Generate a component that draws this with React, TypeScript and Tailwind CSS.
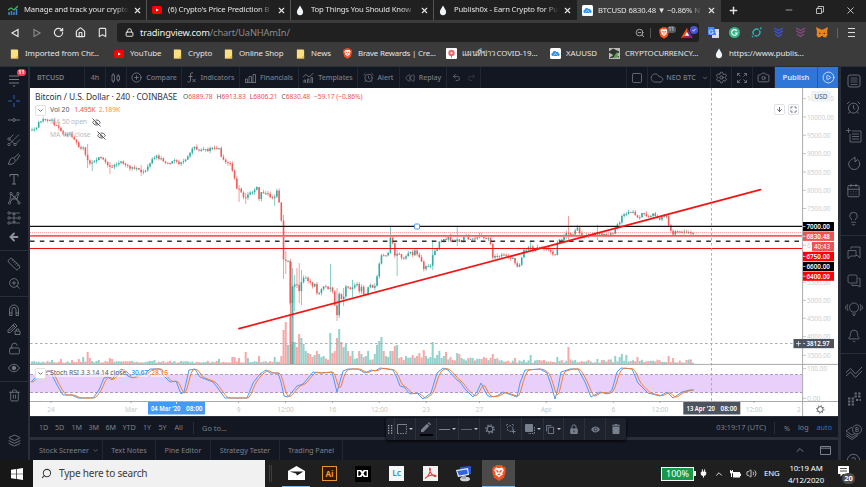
import type { ReactNode } from "react";
import {
  AlarmClock,
  ArrowDown,
  ArrowLeft,
  Bell,
  Bookmark,
  CalendarDays,
  Camera,
  ChevronDown,
  ChevronUp,
  CircleHelp,
  CirclePlay,
  CirclePlus,
  Cloud,
  Eye,
  EyeOff,
  House,
  Layers,
  Lightbulb,
  Lock,
  LockOpen,
  Maximize,
  Minus,
  Plug,
  Plus,
  Redo2,
  Rewind,
  RotateCw,
  Ruler,
  Search,
  Settings,
  Square,
  Trash2,
  Undo2,
  Volume2,
  X,
  ZoomIn,
  ZoomOut,
} from "lucide-react";

type Point = [number, number];

const UP = "#26a69a";
const DOWN = "#ef5350";
const CHART_X = 30;
const CHART_Y = 88;
const STEP = 2.226;

// close price track, in screen units
const closes: Point[] = [
  [31, 129.5], [36, 128.5], [38, 124], [41, 120], [44, 119.5], [48, 120], [51, 118], [54, 124],
  [57, 125], [60, 129], [62, 132], [65, 135], [70, 134], [73, 138], [76, 142], [78, 147],
  [81, 148], [84, 148], [87, 160], [89, 163], [92, 163], [96, 159], [99, 158], [102, 158],
  [105, 161], [108, 165], [111, 169], [114, 165], [118, 164], [121, 162], [124, 164], [127, 166],
  [130, 169], [133, 168], [135, 170], [138, 168], [141, 171], [144, 171], [147, 168], [150, 163],
  [153, 159], [156, 156], [159, 158], [162, 159], [165, 163], [168, 164], [171, 163], [173, 160],
  [176, 162], [180, 164], [184, 162], [186, 159], [189, 155], [192, 149], [195, 147], [198, 151],
  [201, 150], [204, 148], [207, 151], [210, 148], [213, 149], [216, 148], [219, 148], [221, 156],
  [225, 162], [231, 163], [233, 174], [235, 179], [237, 189], [240, 188], [242, 194], [244, 197],
  [247, 199], [248, 194], [251, 193], [253, 193], [257, 187], [259, 199], [261, 191], [263, 192],
  [267, 194], [270, 197], [273, 199], [277, 191], [279, 202], [281, 212], [283, 260], [286, 260],
  [288, 262], [290, 306], [292, 286], [294, 284], [297, 284], [299, 291], [301, 284], [303, 277],
  [306, 279], [308, 281], [310, 282], [312, 288], [315, 284], [317, 294], [319, 292], [321, 291],
  [323, 286], [326, 287], [328, 288], [330, 288], [332, 289], [334, 302], [337, 316], [339, 294],
  [341, 300], [343, 300], [346, 287], [348, 287], [351, 289], [353, 288], [357, 284], [359, 291],
  [361, 285], [363, 295], [366, 293], [368, 287], [370, 285], [372, 288], [374, 289], [377, 276],
  [379, 266], [381, 254], [383, 256], [386, 256], [388, 254], [390, 237], [392, 240], [395, 257],
  [397, 254], [399, 253], [401, 257], [403, 258], [406, 256], [410, 252], [412, 256], [414, 251],
  [417, 253], [419, 258], [421, 259], [424, 270], [426, 265], [428, 266], [430, 269], [432, 255],
  [434, 252], [437, 248], [439, 242], [441, 243], [443, 236], [445, 242], [448, 236], [452, 242],
  [457, 240], [460, 241], [463, 238], [467, 235], [469, 241], [473, 238], [477, 237], [479, 234],
  [482, 236], [485, 240], [489, 239], [492, 249], [493, 259], [496, 256], [500, 255], [503, 255],
  [507, 256], [510, 258], [513, 258], [516, 267], [518, 268], [521, 260], [523, 251], [526, 249],
  [530, 247], [533, 250], [537, 248], [540, 247], [543, 248], [547, 248], [550, 252], [553, 254],
  [556, 256], [557.5, 240], [560, 240], [563, 239], [567, 233], [572, 235], [575, 231], [578, 228],
  [581, 237], [585, 236], [590, 236], [593, 234], [598, 234], [603, 235], [610, 235], [613, 233],
  [617, 225], [620, 222], [623, 214], [627, 214], [632, 211], [635, 214], [638, 219], [642, 214],
  [647, 216], [650, 216], [653, 213], [657, 217], [659, 221], [662, 217], [666, 216], [668, 221],
  [669, 228], [673, 234], [677, 231], [680, 232], [683, 231], [687, 232], [691, 234], [695, 232],
];

// x, top, bottom
const longWicks: [number, number, number][] = [
  [87, 144, 168], [92, 160, 171], [111, 162, 174], [140, 165, 176], [240, 185, 202], [246, 193, 204],
  [275, 195, 206], [283, 215, 279], [286, 251, 274], [292, 268, 318], [295, 275, 311], [297, 268, 288],
  [299, 263, 303], [301, 270, 305], [330, 264, 292], [337, 288, 321], [339, 292, 318], [343, 288, 306],
  [353, 280, 297], [390, 227, 254], [397, 250, 276], [432, 240, 270], [457, 227, 246], [569, 216, 240],
  [597, 225, 240], [531, 241, 252],
];

const bigVolumes: Point[] = [
  [51, 4], [60, 5], [72, 4], [78, 5], [84, 7], [87, 12], [90, 6], [98, 4], [110, 6], [113, 5], [154, 4],
  [220, 5], [232, 7], [235, 7], [238, 6], [245, 12], [248, 6], [259, 8], [274, 7], [281, 8], [283, 34],
  [286, 42], [288, 19], [290, 50], [292, 22], [294, 22], [297, 17], [299, 30], [301, 26], [303, 20],
  [306, 13], [308, 11], [310, 10], [312, 7], [315, 9], [317, 13], [319, 10], [323, 8], [330, 31],
  [332, 11], [334, 13], [337, 26], [339, 35], [341, 22], [343, 17], [346, 20], [348, 13], [350, 8],
  [353, 13], [359, 13], [361, 10], [366, 8], [368, 13], [374, 10], [377, 19], [379, 23], [381, 27],
  [383, 13], [386, 8], [390, 13], [392, 13], [395, 18], [397, 19], [401, 7], [406, 8], [412, 9],
  [417, 8], [419, 11], [423, 14], [426, 8], [430, 7], [432, 22], [437, 9], [439, 13], [443, 8],
  [446, 12], [457, 11], [459, 10], [492, 10], [516, 6], [530, 9], [557, 7], [569, 17], [598, 5],
  [615, 8], [619, 7], [622, 10], [627, 9], [638, 7], [669, 8], [673, 6],
];

const stoch: Point[] = [
  [31, 382], [36, 377], [42, 373], [47, 371], [50, 371], [57, 385], [63, 395], [72, 395], [78, 398],
  [93, 398], [99, 390], [104, 378], [108, 377], [112, 380], [117, 372], [122, 369], [128, 376],
  [133, 378], [140, 374], [145, 374], [150, 369], [160, 369], [163, 375], [170, 382], [176, 381],
  [181, 394], [184, 392], [189, 370], [195, 369], [200, 377], [213, 382], [217, 387], [225, 398],
  [247, 398], [253, 383], [260, 374], [266, 370], [270, 373], [278, 373], [281, 382], [284, 396],
  [288, 397], [297, 386], [303, 384], [313, 372], [320, 373], [332, 372], [337, 392], [343, 371],
  [348, 369], [358, 369], [365, 373], [371, 370], [375, 371], [380, 368], [393, 370], [397, 378],
  [400, 386], [404, 387], [410, 394], [417, 393], [423, 399], [431, 393], [437, 373], [443, 368],
  [448, 370], [457, 380], [460, 382], [465, 389], [473, 397], [477, 392], [481, 383], [487, 395],
  [490, 397], [497, 396], [503, 392], [517, 397], [520, 383], [525, 370], [540, 369], [547, 373],
  [552, 388], [555, 399], [558, 388], [561, 372], [570, 369], [578, 369], [585, 382], [591, 397],
  [600, 392], [607, 394], [612, 390], [617, 372], [621, 368], [632, 369], [638, 383], [648, 393],
  [660, 396], [667, 392], [673, 398], [682, 392], [690, 390], [694, 390],
];

function at(points: Point[], x: number) {
  for (let i = 1; i < points.length; i++) {
    const [x0, y0] = points[i - 1];
    const [x1, y1] = points[i];
    if (x <= x1) {
      return y0 + ((y1 - y0) * Math.max(0, x - x0)) / (x1 - x0);
    }
  }
  return points[points.length - 1][1];
}

function noise(n: number) {
  const v = Math.sin(n * 127.1 + 11.7) * 43758.5453;
  return v - Math.floor(v);
}

const candles = Array.from({ length: 298 }, (_, i) => {
  const x = 32 + i * STEP;
  const jitter = (k: number) => (noise(k) - 0.5) * 2.4;
  const open = i === 0 ? 130 : at(closes, x - STEP) + jitter(i - 1);
  const close = at(closes, x) + jitter(i);
  let top = Math.min(open, close) - noise(i + 400) * 2.6;
  let bottom = Math.max(open, close) + noise(i + 900) * 2.6;
  const wick = longWicks.find(([wx]) => Math.abs(wx - x) <= STEP / 2);
  if (wick) {
    top = Math.min(wick[1], top);
    bottom = Math.max(wick[2], bottom);
  }
  const big = bigVolumes.find(([vx]) => Math.abs(vx - x) <= STEP / 2);
  const base = x > 283 && x < 500 ? 3.5 : 1.2;
  const volume = big ? big[1] : base + noise(i + 50) * (x > 283 ? 3.5 : 2);
  return { x, open, close, top, bottom, volume, color: close <= open ? UP : DOWN };
});

const stochLine = stoch.map((p) => p.join(",")).join(" ");
const signalLine = Array.from({ length: 332 }, (_, i) => {
  const x = 31 + i * 2;
  const y = (at(stoch, x - 4) + at(stoch, x - 2.5) + at(stoch, x - 1)) / 3;
  return `${x},${y.toFixed(1)}`;
}).join(" ");

const priceLabels: [string, number][] = [
  ["10500.00", 98.7], ["10000.00", 117], ["9500.00", 135.3], ["9000.00", 153.6], ["8500.00", 172],
  ["8000.00", 190.3], ["7500.00", 208.5], ["6500.00", 245.2], ["5500.00", 282.3], ["5000.00", 300.3],
  ["4500.00", 318.3], ["4000.00", 336.7], ["3500.00", 355.3], ["100.00", 368.7], ["0.00", 398.3],
];

const timeLabels: [string, number][] = [
  ["24", 51], ["Mar", 131], ["9", 238.5], ["12:00", 285.5], ["16", 332.5], ["12:00", 379.3],
  ["23", 426.3], ["27", 479.5], ["Apr", 546.3], ["6", 613.3], ["12:00", 660], ["12:00", 754],
];

const priceTags: [string, number, string][] = [
  ["7000.00", 222, "#000000"], ["6830.48", 231.7, "#ef5350"], ["6750.00", 251.8, "#ff0000"],
  ["6600.00", 261.8, "#000000"], ["6400.00", 271.6, "#ff0000"],
];

function Chart() {
  return (
    <svg
      viewBox={`${CHART_X} ${CHART_Y} 808 328`}
      className="block h-[328px] w-[808px]"
      fontFamily="'Noto Sans', sans-serif"
      fontSize="7.2"
    >
      <rect x="30" y="374.5" width="772" height="18" fill="#e9d0fb" />
      <path d="M30 374.5H802M30 392.5H802" stroke="#9b8aa8" strokeWidth="0.8" strokeDasharray="3 2" />
      {candles.map((c) => (
        <rect
          key={c.x}
          x={c.x - 1}
          y={364 - c.volume}
          width="2"
          height={c.volume}
          fill={c.color}
          opacity="0.5"
        />
      ))}
      {candles.map((c) => (
        <g key={c.x} fill={c.color}>
          <rect x={c.x - 0.35} y={c.top} width="0.8" height={c.bottom - c.top} opacity="0.7" />
          <rect
            x={c.x - 0.8}
            y={Math.min(c.open, c.close)}
            width="1.6"
            height={Math.max(1, Math.abs(c.close - c.open))}
            opacity="0.9"
          />
        </g>
      ))}
      <rect x="290" y="262" width="1.8" height="102" fill={DOWN} opacity="0.65" />
      <rect x="292" y="286" width="1.6" height="78" fill={UP} opacity="0.65" />

      <path d="M30 232.6H802" stroke="#ef5350" strokeWidth="0.8" strokeDasharray="1 1" opacity="0.65" />
      <path d="M30 236H802" stroke="#ff8a8a" strokeWidth="1.8" />
      <path d="M30 235.6H802" stroke="#f04040" strokeWidth="0.7" />
      <path d="M30 241.3H802" stroke="#333" strokeWidth="1.4" strokeDasharray="4.6 5.2" />
      <path d="M30 248.5H802" stroke="#f01010" strokeWidth="1" />
      <path d="M30 226.4H802" stroke="#111" strokeWidth="1.1" />
      <path d="M239 328.6L760.5 189.7" stroke="#f51414" strokeWidth="1.8" strokeLinecap="round" />
      <rect x="414.6" y="224" width="5" height="5" rx="1" fill="#fff" stroke="#4b93e8" />

      <polyline points={stochLine} fill="none" stroke="#4a9cf8" strokeWidth="1" />
      <polyline points={signalLine} fill="none" stroke="#f08038" strokeWidth="1" />

      <path d="M30 343.5H802M711.5 88V401" stroke="#a2a5ac" strokeWidth="0.9" strokeDasharray="2.6 2.4" />
      <path d="M30 364.4H838M30 401.5H838M802.6 88V416" stroke="#a0a0a3" strokeWidth="0.9" />

      {priceLabels.map(([label, y]) => (
        <g key={label}>
          <path d={`M803 ${y}h3`} stroke="#b5b5b8" strokeWidth="0.8" />
          <text
            x="807"
            y={y + 2.5}
            fill="#cdcdd0"
            textLength={label.length * 3.36}
            lengthAdjust="spacingAndGlyphs"
          >
            {label}
          </text>
        </g>
      ))}
      <rect x="811" y="91" width="20" height="10.5" rx="2" fill="#edf1f8" />
      <text x="821" y="98.9" textAnchor="middle" fontSize="6.4" fill="#50535e">USD</text>
      {priceTags.map(([label, y, fill]) => (
        <g key={label}>
          <rect x="803" y={y} width="31" height="9.2" fill={fill} />
          <path d={`M803 ${y + 4.6}h2.5`} stroke="#fff" strokeWidth="0.7" />
          <text x="806.5" y={y + 7.1} fill="#fff" fontWeight="600" textLength="23.5" lengthAdjust="spacingAndGlyphs">
            {label}
          </text>
        </g>
      ))}
      <rect x="812" y="242" width="22" height="9.2" fill="#ef5350" />
      <text x="814" y="249.1" fill="#fff" textLength="16" lengthAdjust="spacingAndGlyphs">40:43</text>
      <rect x="793.5" y="339" width="40.5" height="9.2" fill="#4c525e" />
      <path d="M796 343.6h5M798.5 341.1v5M803 343.6h2" stroke="#fff" strokeWidth="0.7" />
      <text x="806.5" y="346.1" fill="#fff" fontWeight="600" textLength="23" lengthAdjust="spacingAndGlyphs">3812.97</text>

      {timeLabels.map(([label, x]) => (
        <g key={x}>
          <path d={`M${x} 401v2`} stroke="#98989c" strokeWidth="0.8" />
          <text x={x} y="412.4" textAnchor="middle" fontSize="6.5" fill="#c8c8cb">{label}</text>
        </g>
      ))}
      <text x="797" y="412.4" fontSize="6.5" fill="#c8c8cb">2</text>
      <rect x="148" y="402" width="57" height="12.5" fill="#419bf9" />
      <path d="M176.5 402v2M711.5 402v2" stroke="#fff" strokeWidth="0.8" />
      <g fontSize="6.5" fontWeight="600" fill="#fff">
        <text x="151" y="410.7" textLength="29.5" lengthAdjust="spacingAndGlyphs">04 Mar '20</text>
        <text x="186" y="410.7" textLength="16.5" lengthAdjust="spacingAndGlyphs">08:00</text>
        <rect x="683.3" y="402" width="57" height="12.5" fill="#4c525e" />
        <text x="686.5" y="410.7" textLength="28.5" lengthAdjust="spacingAndGlyphs">13 Apr '20</text>
        <text x="720.5" y="410.7" textLength="16.5" lengthAdjust="spacingAndGlyphs">08:00</text>
      </g>
      <g stroke="#40434c" fill="none">
        <circle cx="820.3" cy="409.4" r="2.8" strokeWidth="0.9" />
        <circle cx="820.3" cy="409.4" r="3.8" strokeWidth="0.9" strokeDasharray="1 1.98" />
      </g>
    </svg>
  );
}

function Drop() {
  return (
    <svg viewBox="0 0 8 12" className="h-[11px] w-2 shrink-0">
      <path d="M4 0.6C5 3 7.4 5 7.4 7.7a3.4 3.4 0 0 1-6.8 0C0.6 5 3 3 4 .6Z" fill="#eef6fb" />
    </svg>
  );
}

function YouTube() {
  return (
    <svg viewBox="0 0 10 8" className="h-2 w-[10px] shrink-0">
      <rect width="10" height="8" rx="2" fill="#f00" />
      <path d="M4 2.4v3.2L6.8 4Z" fill="#fff" />
    </svg>
  );
}

function CloudBadge() {
  return (
    <svg viewBox="0 0 11 11" className="size-[11px] shrink-0">
      <rect width="11" height="11" rx="1.5" fill="#fff" />
      <path d="M2.6 8a1.6 1.6 0 0 1-.1-3.1 2.2 2.2 0 0 1 4-1A2 2 0 0 1 8.7 5.2 1.5 1.5 0 0 1 8.6 8Z" fill="#2f8eea" />
      <path d="M3.4 7.2 5.5 5.3 7.6 7.2" stroke="#fff" strokeWidth=".7" fill="none" />
    </svg>
  );
}

function Brave({ className }: { className: string }) {
  return (
    <svg viewBox="0 0 20 23" className={className}>
      <path d="M6 0h8l2 2.5 2-.3L20 6l-.8 2 .5 2-2.6 8.5L10 23l-7.1-4.500L.3 10l.5-2L0 6l2-3.800 2 .3Z" fill="#f4511e" />
      <path d="m10 4.500 4.500-.8L17 7.500 14.700 12l.6 2-2.800 1.500L10 18l-2.500-2.500L4.700 14l.6-2L3 7.500l2.500-3.800Z" fill="#fff" />
      <path d="M5.500 7.500 9 8.500 8.500 11ZM14.500 7.500 11 8.500l.5 2.500ZM10 11v3M7.500 14.200 10 13l2.500 1.200" fill="#f4511e" stroke="#f4511e" strokeWidth=".7" />
    </svg>
  );
}

function Folder() {
  return (
    <svg viewBox="0 0 9 11" className="h-[10px] w-[9px] shrink-0">
      <path d="M0.5 0.5h7l1 1v9h-8Z" fill="#fbdf82" />
      <path d="M6.5 8h2v2.5h-8v-1h6Z" fill="#e5bb4b" />
    </svg>
  );
}

function Tab({ icon, title, className }: { icon: ReactNode; title: string; className: string }) {
  return (
    <div className={`flex h-full shrink-0 items-center ${className}`}>
      <span className="flex w-[10px] shrink-0 justify-center">{icon}</span>
      <span className="ml-[6px] w-[105px] shrink-0 overflow-hidden whitespace-nowrap [mask-image:linear-gradient(to_right,black_86%,transparent)]">
        {title}
      </span>
      <X className="ml-1 size-[9px] shrink-0" strokeWidth={3} />
    </div>
  );
}

function TabStrip() {
  return (
    <div className="flex h-[23px] bg-[#3b3b3b] text-[7.7px] tracking-[-0.14px] text-[#e4e4e4]">
      <div className="flex h-5 bg-[#202020]">
        <Tab
          className="w-[147px] border-r border-[#555] pl-2"
          title="Manage and track your crypto"
          icon={
            <svg viewBox="0 0 10 10" className="size-[10px]">
              <path d="M1 10V7M3.5 10V6M6 10V7M8.5 10V4" stroke="#3c83d0" strokeWidth="1.6" />
              <path d="M0 5 3 3l3 2 4-4" stroke="#43b35c" strokeWidth="1.3" fill="none" />
            </svg>
          }
        />
        <Tab className="w-[144px] border-r border-[#555] pl-[5px]" title="(6) Crypto's Price Prediction B" icon={<YouTube />} />
        <Tab className="w-[143px] border-r border-[#555] pl-1" title="Top Things You Should Know" icon={<Drop />} />
        <Tab className="w-[143px] pl-1" title="Publish0x - Earn Crypto for Pu" icon={<Drop />} />
      </div>
      <Tab className="mt-[-1px] w-[144px] bg-[#3b3b3b] pl-[5px]" title="BTCUSD 6830.48 ▼ −0.86% N" icon={<CloudBadge />} />
      <div className="flex h-[22px] flex-1 items-center bg-[#202020] pb-0.5">
        <Plus className="ml-[7px] size-[11px]" strokeWidth={3} />
        <Minus className="ml-[45px] size-[10px]" strokeWidth={1.5} />
        <svg viewBox="0 0 8 8" className="ml-[22px] size-2" fill="none" stroke="#ddd" strokeWidth=".8">
          <path d="M.5 2.5h5v5h-5ZM2 2.5v-2h5.5v5.5h-2" />
        </svg>
        <X className="ml-[21px] size-[11px]" strokeWidth={1.8} />
      </div>
    </div>
  );
}

function ChevronStack({ className }: { className: string }) {
  return (
    <svg viewBox="0 0 11 11" className={`size-[11px] ${className}`} fill="none" stroke="currentColor" strokeWidth="1.3">
      <path d="m1 1 4.5 2.5L10 1M1 3.8l4.5 2.5L10 3.8M2 7l3.5 2.5L9 7" />
    </svg>
  );
}

function AddressBar() {
  return (
    <div className="flex h-[19px] items-center bg-[#3b3b3b] text-[#e4e4e4]">
      <svg viewBox="0 0 10 10" className="ml-[10px] size-[10px]" fill="none" stroke="#e8e8e8" strokeWidth="1.2">
        <path d="M8 1.5v7L2 5Z" />
      </svg>
      <svg viewBox="0 0 10 10" className="ml-[12px] size-[10px]" fill="none" stroke="#888" strokeWidth="1.2">
        <path d="M2 1.5v7L8 5Z" />
      </svg>
      <RotateCw className="ml-[11px] size-[11px]" strokeWidth={2.6} />
      <House className="ml-[11px] size-[11px]" strokeWidth={2.6} />
      <Bookmark className="ml-[11px] size-[11px]" strokeWidth={2.4} />
      <div className="ml-[9px] flex h-[19px] w-[582px] items-center rounded-[3px] bg-[#202020]">
        <Lock className="ml-2 size-[9px]" strokeWidth={2.6} />
        <span className="ml-[6px] text-[9.3px] tracking-[-0.16px] text-[#f0f0f0]">
          tradingview.com<span className="text-[#8c8c8c]">/chart/UaNHAmIn/</span>
        </span>
        <ZoomOut className="ml-auto size-[10px] text-[#b0b0b0]" strokeWidth={2.2} />
        <div className="ml-[5px] h-[10px] w-px bg-[#555]" />
        <div className="relative ml-2 flex w-[17px] items-center">
          <Brave className="h-3 w-[10px]" />
          <span className="absolute -top-px left-2 rounded-full bg-[#5b5d66] px-[1.5px] text-[5px] leading-[7px]">11</span>
        </div>
        <svg viewBox="0 0 17 13" className="mr-px ml-[5px] h-[13px] w-[17px]">
          <path d="M6 2 12 12H0Z" fill="#9e1f63" />
          <path d="M6 2 12 12 6 9Z" fill="#662d91" />
          <path d="M6 2 0 12 6 9Z" fill="#ff5000" />
          <path d="M6 6 8.3 9.8H3.7Z" fill="#fff" />
          <circle cx="13" cy="4" r="4" fill="#4c54d2" />
          <path d="m11.5 4 1 1.2L14.5 2.8" stroke="#fff" strokeWidth=".8" fill="none" />
        </svg>
      </div>
      <svg viewBox="0 0 11 11" className="ml-[9px] size-[11px]">
        <rect x="4" y="2" width="7" height="9" fill="#d5d9e0" />
        <path d="M0 0h6l2.5 8H0Z" fill="#4385f5" />
        <path d="M5 4a2 2 0 1 0 .2 1.2H3.8M7.5 6h3M8 9l2.3-3" stroke="#fff" strokeWidth=".7" fill="none" />
      </svg>
      <svg viewBox="0 0 11 11" className="ml-[10px] size-[11px]">
        <circle cx="5.5" cy="5.5" r="5.5" fill="#35b887" />
        <path d="M7.7 3.8A2.8 2.8 0 1 0 8.2 6H6" stroke="#fff" strokeWidth="1.1" fill="none" />
      </svg>
      <svg viewBox="0 0 11 11" className="ml-[11px] size-[11px]" fill="none" stroke="#2cb9bd" strokeWidth="1.3">
        <path d="M2.6 7.6A3.6 3.6 0 0 1 7.5 2.6M8.400 3.400A3.600 3.600 0 0 1 3.500 8.400M1 10l1-1M9 2l1.500-1.500" />
      </svg>
      <ChevronStack className="ml-[11px] text-[#3a55d6]" />
      <ChevronStack className="ml-[11px] text-[#8a4a83]" />
      <svg viewBox="0 0 12 11" className="ml-[10px] h-[11px] w-3">
        <path d="M0 0 5 2.5h2L12 0l-1 5 .5 3-1.5 2.5L7 10H5l-3 .5L.5 8 1 5Z" fill="#e8831d" />
        <path d="M3 5.5 5 7H3ZM9 5.5 7 7h2ZM5 9h2v1.2H5Z" fill="#4a2b17" />
      </svg>
      <div className="ml-[9px] h-[10px] w-px bg-[#666]" />
      <div className="ml-[10px] flex w-[7px] flex-col gap-[3px]">
        <i className="h-px bg-[#ddd]" />
        <i className="h-px bg-[#ddd]" />
        <i className="h-px bg-[#ddd]" />
      </div>
    </div>
  );
}

function BookmarkItem({ icon, label, className }: { icon: ReactNode; label: string; className: string }) {
  return (
    <div className={`flex shrink-0 items-center whitespace-nowrap ${className}`}>
      {icon}
      <span>{label}</span>
    </div>
  );
}

function Bookmarks() {
  return (
    <div className="flex h-6 items-center bg-[#3b3b3b] pl-[10px] text-[7.9px] tracking-[-0.08px] text-[#e4e4e4]">
      <BookmarkItem className="w-[104px] gap-[6px]" icon={<Folder />} label="Imported from Chr..." />
      <BookmarkItem className="w-[59px] gap-[6px]" icon={<YouTube />} label="YouTube" />
      <BookmarkItem className="w-[51px] gap-[6px]" icon={<Folder />} label="Crypto" />
      <BookmarkItem className="w-[72px] gap-[6px]" icon={<Folder />} label="Online Shop" />
      <BookmarkItem className="w-[47px] gap-[6px]" icon={<Folder />} label="News" />
      <BookmarkItem className="w-[103px] gap-[6px] tracking-[-0.2px]" icon={<Brave className="h-[11px] w-[9px]" />} label="Brave Rewards | Cre..." />
      <BookmarkItem
        className="w-[104px] gap-[5px]"
        icon={
          <svg viewBox="0 0 11 11" className="size-[11px]">
            <rect width="11" height="11" rx="1" fill="#fff" />
            <circle cx="5.5" cy="5" r="3.2" fill="#ec6b70" />
            <circle cx="5.5" cy="5" r="1" fill="#fff" />
            <path d="M5.5 8v2" stroke="#ec6b70" />
          </svg>
        }
        label="แผนที่ข่าว COVID-19..."
      />
      <BookmarkItem className="w-[59px] gap-[5px]" icon={<CloudBadge />} label="XAUUSD" />
      <BookmarkItem
        className="w-[106px] gap-[5px] tracking-[-0.15px]"
        icon={
          <svg viewBox="0 0 11 11" className="size-[11px]">
            <rect width="11" height="11" fill="#b9bbb6" />
            <path d="m0 4 4-3 6 3-5 3ZM1 10l4-3 5 2" fill="#303430" stroke="#303430" />
            <path d="M4 10 8 4l1 5Z" fill="#5aa24d" />
          </svg>
        }
        label="CRYPTOCURRENCY..."
      />
      <BookmarkItem className="gap-[6px]" icon={<Drop />} label="https://www.publis..." />
    </div>
  );
}

function Cell({ className, children }: { className: string; children: ReactNode }) {
  return (
    <div className={`flex h-full shrink-0 items-center justify-center border-r border-[#232733] whitespace-nowrap ${className}`}>
      {children}
    </div>
  );
}

function Header() {
  return (
    <div className="flex h-[21px] bg-[#131722] text-[7.1px] font-medium tracking-[-0.05px] text-[#787c87]">
      <Cell className="w-[55px] justify-start pl-[7px] font-semibold">BTCUSD</Cell>
      <Cell className="w-[21px]">4h</Cell>
      <Cell className="w-[21px]">
        <svg viewBox="0 0 10 12" className="h-3 w-[10px]" fill="none" stroke="currentColor" strokeWidth=".8">
          <path d="M1 3h2.5v6H1ZM2.2 1v2M2.2 9v2M6 4h2.5v4H6ZM7.2 2v2M7.2 8v2" />
        </svg>
      </Cell>
      <Cell className="w-[55px] gap-[4px]">
        <CirclePlus className="size-[11px]" strokeWidth={1.8} />
        Compare
      </Cell>
      <Cell className="w-[58px] gap-[5px]">
        <svg viewBox="0 0 9 11" className="h-[11px] w-[9px]" fill="none" stroke="currentColor" strokeWidth=".9">
          <path d="M6 1C4 0 3.5 1.5 3.5 3v5c0 2-1.5 2.5-3 1.7M1.500 4.500h4M5.500 7l3 3M8.500 7l-3 3" />
        </svg>
        Indicators
      </Cell>
      <Cell className="w-[59px] gap-[4px]">
        <svg viewBox="0 0 11 10" className="h-[10px] w-[11px]" fill="none" stroke="currentColor" strokeWidth=".8">
          <path d="M.5 9.5V6h2v3.5M4 9.5V3.5h2.5v6M8 9.5v-8h2.5v8M0 9.5h11" />
        </svg>
        Financials
      </Cell>
      <Cell className="w-[59px] gap-[4px]">
        <svg viewBox="0 0 11 10" className="h-[10px] w-[11px]" fill="none" stroke="currentColor" strokeWidth=".8">
          <path d="m0 4 3-2.5L6 4l4.5-4M1 10V7h1.5v3M4.5 10V6H6v4M8 10V4.5h1.5V10" />
        </svg>
        Templates
      </Cell>
      <Cell className="w-[42px] gap-[3px]">
        <AlarmClock className="size-[11px]" strokeWidth={1.6} />
        Alert
      </Cell>
      <Cell className="w-[47px] gap-[4px]">
        <Rewind className="size-[10px]" strokeWidth={1.6} />
        Replay
      </Cell>
      <Cell className="w-[34px] gap-[6px]">
        <Undo2 className="size-[9px]" strokeWidth={1.8} />
        <Redo2 className="size-[9px] opacity-40" strokeWidth={1.8} />
      </Cell>
      <div className="h-full flex-1 border-r border-[#232733]" />
      <Cell className="w-[21px]">
        <Square className="size-3" strokeWidth={1.5} />
      </Cell>
      <Cell className="w-[63px] gap-[2px]">
        <Cloud className="size-[14px]" strokeWidth={1.5} strokeDasharray="3 2" />
        NEO BTC
        <ChevronDown className="ml-[4px] size-[6px]" strokeWidth={3} />
      </Cell>
      <Cell className="w-[21px]">
        <Settings className="size-[13px]" strokeWidth={1.6} />
      </Cell>
      <Cell className="w-[21px]">
        <svg viewBox="0 0 10 10" className="size-[10px]" fill="none" stroke="currentColor" strokeWidth=".8">
          <path d="M.5 3V.5H3M7 .5h2.5V3M9.5 7v2.5H7M3 9.5H.5V7M.5.5l3 3M9.5.5l-3 3M.5 9.5l3-3M9.5 9.5l-3-3" />
        </svg>
      </Cell>
      <Cell className="w-[22px]">
        <Camera className="size-[13px]" strokeWidth={1.5} />
      </Cell>
      <div className="flex w-[42px] items-center justify-center bg-[#2f76d9] text-[7.6px] font-semibold text-[#d6e5fb]">Publish</div>
      <div className="flex w-[21px] items-center justify-center border-l border-[#1f5cb5] bg-[#2f76d9] text-[#d6e5fb]">
        <CirclePlay className="size-[13px]" strokeWidth={1.7} />
      </div>
    </div>
  );
}

function Slot({ className = "h-[19.5px]", children }: { className?: string; children: ReactNode }) {
  return <div className={`flex w-full shrink-0 items-center justify-center ${className}`}>{children}</div>;
}

const tool = "size-[14px]";

function LeftBar() {
  return (
    <div className="flex w-7 flex-col items-center overflow-hidden bg-[#131722] text-[#747883]">
      <div className="relative flex h-[24px] w-full items-center justify-center">
        <svg viewBox="0 0 10 14" className="mt-[3px] h-[14px] w-[10px]" stroke="currentColor" fill="none">
          <path d="M0 2h10M0 5.5h10M0 9h10" strokeWidth="1.1" />
          <path d="m3.5 11.5h3L5 13Z" fill="currentColor" stroke="none" />
        </svg>
        <span className="absolute top-[1.5px] left-[17px] h-[7.5px] w-[9px] rounded-full bg-[#f0405a] text-center text-[5.5px] leading-[7.5px] font-bold text-white">11</span>
      </div>
      <Slot>
        <svg viewBox="0 0 14 14" className={`${tool} text-[#2862b8]`} stroke="currentColor">
          <path d="M7 1v4M7 9v4M1 7h4M9 7h4" />
        </svg>
      </Slot>
      <Slot>
        <svg viewBox="0 0 14 14" className={tool} stroke="currentColor" fill="none" strokeWidth=".9">
          <path d="M1 7h4.5M8.5 7H13" />
          <circle cx="7" cy="7" r="1.4" />
        </svg>
      </Slot>
      <Slot>
        <svg viewBox="0 0 14 14" className={tool} stroke="currentColor" fill="none" strokeWidth=".8">
          <path d="M2.5 5.500 6.500 1.500M3 10.500l9-9M8.500 11 13 6.500M3 6.500l4.500 4.500" />
          <circle cx="2" cy="6" r="1.2" />
          <circle cx="2" cy="11.5" r="1.2" />
          <circle cx="8" cy="11.5" r="1.2" />
        </svg>
      </Slot>
      <Slot>
        <svg viewBox="0 0 14 14" className={tool} stroke="currentColor" fill="none" strokeWidth=".9">
          <path d="M1 12c1.5-.5 1-3.500 3-5.500 2-1.500 5 .5 4 3C7 12.500 3.500 12.500 1 12ZM7 6l5-4.500M9.500 8.500 13 3" />
        </svg>
      </Slot>
      <Slot>
        <svg viewBox="0 0 14 14" className={tool} stroke="currentColor" fill="none">
          <path d="M3 4.500V2.500h8v2M7 2.500v9.500M5 12h4" />
        </svg>
      </Slot>
      <Slot>
        <svg viewBox="0 0 14 14" className={tool} stroke="currentColor" fill="none" strokeWidth=".8">
          <path d="M2.500 11 4 3l6 5 1.500-4.500M3 11l7-7.500M4.500 3.500l7 7.500M10 8l1.700 3M4 8h6" />
          <circle cx="4" cy="2.500" r="1.2" />
          <circle cx="11" cy="2.500" r="1.2" />
          <circle cx="2.500" cy="12" r="1.2" />
          <circle cx="12" cy="12" r="1.2" />
        </svg>
      </Slot>
      <Slot>
        <svg viewBox="0 0 14 14" className={tool} stroke="currentColor" fill="none" strokeWidth=".8">
          <path d="M3 2h10M3 7h8M3 12h10M7 2v10M5.500 4 7 2l1.500 2M5.500 10 7 12l1.500-2" />
          <circle cx="2" cy="2" r="1.2" />
          <circle cx="2" cy="7" r="1.2" />
          <circle cx="12.2" cy="7" r="1.2" />
          <circle cx="2" cy="12" r="1.2" />
        </svg>
      </Slot>
      <Slot>
        <ArrowLeft className="size-[12px] text-[#8f939c]" strokeWidth={3.6} />
      </Slot>
      <div className="mt-[3px] h-px w-full shrink-0 bg-[#2a2e39]" />
      <Slot className="mt-[3px] h-[19.5px]">
        <Ruler className="size-[14px]" strokeWidth={1.5} />
      </Slot>
      <Slot>
        <ZoomIn className="size-[13px]" strokeWidth={1.6} />
      </Slot>
      <div className="mt-[3px] h-px w-full shrink-0 bg-[#2a2e39]" />
      <Slot className="mt-[3px] h-[19.5px]">
        <svg viewBox="0 0 14 14" className={tool} stroke="currentColor" fill="none" strokeWidth=".9">
          <path d="M2.500 12.500V6.500a4.500 4.500 0 0 1 9 0v6H9V6.500a2 2 0 0 0-4 0v6ZM2.500 10H5M9 10h2.500" />
        </svg>
      </Slot>
      <Slot>
        <svg viewBox="0 0 14 14" className={tool} stroke="currentColor" fill="none" strokeWidth=".9">
          <path d="M1 10.500v-2.500l6.500-6.500L10 4l-6.500 6.500ZM6 3l2.500 2.500M2.500 9l5-5M8 9h5v3.500H8ZM9.200 9V8a1.300 1.300 0 0 1 2.600 0" />
        </svg>
      </Slot>
      <Slot>
        <LockOpen className="size-[13px]" strokeWidth={1.6} />
      </Slot>
      <Slot>
        <svg viewBox="0 0 14 14" className={tool} stroke="currentColor" fill="none" strokeWidth=".9">
          <path d="M1.500 7c3-5 8-5 11 0-3 5-8 5-11 0Z" />
          <circle cx="7" cy="7" r="1.800" fill="currentColor" />
        </svg>
      </Slot>
      <div className="mt-[3px] h-px w-full shrink-0 bg-[#2a2e39]" />
      <Slot className="mt-[3px] h-[20px]">
        <Trash2 className="size-[13px]" strokeWidth={1.6} />
      </Slot>
      <Slot className="mt-[25px] h-[20px]">
        <Layers className="size-[13px]" strokeWidth={1.6} />
      </Slot>
    </div>
  );
}

function RightBar() {
  return (
    <div className="flex w-[25px] flex-col items-center overflow-hidden bg-[#131722] text-[#666a75]">
      <Slot className="h-[27px]">
        <svg viewBox="0 0 14 14" className={tool} stroke="currentColor" fill="none">
          <rect x="1" y="1" width="12" height="12" rx="2" />
          <path d="M3.500 4h7M3.500 6h7M3.500 8h7M3.500 10.500h7" strokeWidth=".8" />
        </svg>
      </Slot>
      <Slot className="h-[27px]">
        <AlarmClock className="size-[15px]" strokeWidth={1.6} />
      </Slot>
      <Slot className="h-[28px]">
        <svg viewBox="0 0 16 15" className="h-[15px] w-4" stroke="currentColor" fill="none" strokeWidth=".9">
          <path d="M6 3h9v11H4V6M6 6h7M6 8.500h7M6 11h7M2.500 0v5M0 2.500h5" />
        </svg>
      </Slot>
      <Slot className="h-[28px]">
        <svg viewBox="0 0 14 14" className={tool} stroke="currentColor" fill="none">
          <path d="M8 1v5l2.500-2.500C12 5 12.700 6.500 12.700 8A5.500 5.500 0 0 1 1.700 8C1.700 4.500 5 3.500 8 1Z" />
        </svg>
      </Slot>
      <Slot className="h-[27px]">
        <CalendarDays className="size-[15px]" strokeWidth={1.6} />
      </Slot>
      <Slot className="h-[28px]">
        <Lightbulb className="size-[15px]" strokeWidth={1.5} />
      </Slot>
      <div className="mt-[3px] h-px w-full shrink-0 bg-[#2a2e39]" />
      <Slot className="mt-[3px] h-[28px]">
        <svg viewBox="0 0 14 14" className={tool} stroke="currentColor" fill="none" strokeWidth=".9">
          <path d="M4 1h9v11l-2.500-2.500H9M4 1v2M1 4.500h8V10H4l-3 2.500Z" />
        </svg>
      </Slot>
      <Slot className="h-[28px]">
        <svg viewBox="0 0 14 14" className={tool} stroke="currentColor" fill="none" strokeWidth=".9">
          <path d="M1 2.500a1.500 1.500 0 0 1 1.500-1.500h6A1.500 1.500 0 0 1 10 2.500V9H2.500A1.500 1.500 0 0 1 1 7.500ZM11.500 4.500H13V13l-2-1.500H5V10" />
        </svg>
      </Slot>
      <Slot className="h-[27px]">
        <svg viewBox="0 0 18 14" className="h-[14px] w-[18px]" fill="none" stroke="currentColor" strokeWidth=".9">
          <path d="M7 10C5.500 8.500 4.500 7.500 4.500 5.500a4.500 4.500 0 0 1 9 0c0 2-1 3-2.500 4.500ZM7 12h4M8 13.500h2M3 2C1.800 4 1.800 7 3 9M15 2c1.200 2 1.200 5 0 7M1 3.500c-.6 1.300-.6 2.700 0 4M17 3.500c.6 1.300.6 2.700 0 4" />
        </svg>
      </Slot>
      <Slot className="h-[28px]">
        <Bell className="size-[14px]" strokeWidth={1.6} />
      </Slot>
      <div className="mt-[3px] h-px w-full shrink-0 bg-[#2a2e39]" />
      <Slot className="mt-[4px] h-[27px]">
        <svg viewBox="0 0 18 12" className="h-3 w-[18px]" fill="none" stroke="currentColor" strokeWidth="1">
          <path d="m1 6.500 4.500-4L10.500 8 17 1M1 10l4.500-4 5 5.500L17 5" />
        </svg>
      </Slot>
      <Slot className="h-[28px]">
        <svg viewBox="0 0 14 14" className={tool} fill="none" stroke="currentColor" strokeWidth="2" strokeDasharray="2.300 1.400">
          <path d="M1 6.500h6M1 9.500h6M1 12.500h6M7.500 1.500h6M7.500 4.500h6M9 8h5" />
        </svg>
      </Slot>
      <Slot className="mt-[3px] h-[32px]">
        <svg viewBox="0 0 18 16" className="h-4 w-[18px]" fill="none" stroke="currentColor" strokeWidth=".9">
          <circle cx="12" cy="5.500" r="4.500" />
          <path d="M10.800 3.500v4h1.800a1 1 0 0 0 0-2h-1.500 1.200a1 1 0 0 0 0-2ZM7 3 1 7l6 4 3-1.500M1 9.500l6 4 6-3.500M1 11.500l6 4 6-4" />
        </svg>
      </Slot>
      <Slot className="h-[24px]">
        <CircleHelp className="size-[15px]" strokeWidth={1.6} />
      </Slot>
    </div>
  );
}

function Legend() {
  return (
    <div className="absolute top-[3px] left-[5px] text-[6.9px] leading-none tracking-[-0.06px] text-[#555963]">
      <div className="flex h-3 items-center whitespace-nowrap">
        <span className="w-[148px] text-[8.5px] tracking-[-0.1px] text-[#30333d]">Bitcoin / U.S. Dollar · 240 · COINBASE</span>
        <span className="flex gap-[4px] pt-px text-[6.7px]">
          <span>O<b className="font-normal text-[#ef5350]">6889.78</b></span>
          <span>H<b className="font-normal text-[#ef5350]">6913.83</b></span>
          <span>L<b className="font-normal text-[#ef5350]">6806.21</b></span>
          <span>C<b className="font-normal text-[#ef5350]">6830.48</b></span>
          <span className="text-[#ef5350]">−59.17 (−0.86%)</span>
        </span>
      </div>
      <div className="mt-px flex h-[12px] items-center">
        <span className="flex size-[11px] items-center justify-center rounded-[2px] border border-[#dfe1e6] bg-white">
          <ChevronDown className="size-[7px]" strokeWidth={3} />
        </span>
        <span className="ml-[4px]">Vol 20</span>
        <span className="ml-[5px] text-[#ef5350]">1.495K</span>
        <span className="ml-[3px] text-[#f59245]">2.189K</span>
      </div>
      <div className="flex h-[13px] items-center pl-[15px]">
        <span className="w-[36px] text-[6.7px] whitespace-nowrap text-[#b9bbc2]">MA 50 open</span>
        <EyeOff className="ml-[6px] size-[9px] text-[#3b3e47]" strokeWidth={2.2} />
      </div>
      <div className="flex h-[12px] items-center pl-[15px]">
        <span className="w-[40.5px] text-[6.7px] whitespace-nowrap text-[#b9bbc2]">MA 100 close</span>
        <EyeOff className="ml-[6px] size-[9px] text-[#3b3e47]" strokeWidth={2.2} />
      </div>
    </div>
  );
}

function DrawCell({ className = "w-[21px]", children }: { className?: string; children: ReactNode }) {
  return (
    <div className={`flex h-full items-center justify-center gap-[2px] border-l border-[#2d313c] ${className}`}>
      {children}
    </div>
  );
}

function Caret() {
  return <i className="size-0 border-x-[2px] border-t-[2px] border-x-transparent border-t-[#c0c4cc]" />;
}

function DrawingToolbar() {
  return (
    <div className="absolute top-px left-[356px] flex h-[22px] w-[240px] rounded-[2px] bg-[#1e222d] text-[#76808f] shadow-[0_1px_3px_#000]">
      <div className="flex w-2 items-center justify-center">
        <svg viewBox="0 0 5 9" className="h-[9px] w-[5px]" fill="#aaaeb6">
          <path d="M0 0h1.3v1.3H0ZM3 0h1.3v1.3H3ZM0 2.5h1.3v1.3H0ZM3 2.5h1.3v1.3H3ZM0 5h1.3v1.3H0ZM3 5h1.3v1.3H3ZM0 7.5h1.3v1.3H0ZM3 7.5h1.3v1.3H3Z" />
        </svg>
      </div>
      <DrawCell>
        <svg viewBox="0 0 10 10" className="size-[10px]" fill="none" stroke="currentColor">
          <path d="M.5 10V.5H10" />
          <path d="M9.5 2v7.5H1" strokeDasharray="1.5 1" />
        </svg>
        <Caret />
      </DrawCell>
      <DrawCell>
        <span className="flex flex-col items-center gap-[2px]">
          <svg viewBox="0 0 10 10" className="size-[10px]" fill="currentColor">
            <path d="M0 10V7.700L6 1.700 8.300 4 2.300 10ZM6.700 1 7.700 0 10 2.300 9 3.300Z" />
          </svg>
          <i className="h-[2px] w-[13px] bg-black" />
        </span>
      </DrawCell>
      <DrawCell className="w-[22px]">
        <i className="h-px w-[11px] bg-current" />
        <Caret />
      </DrawCell>
      <DrawCell>
        <i className="h-px w-[11px] bg-current opacity-70" />
        <Caret />
      </DrawCell>
      <DrawCell>
        <svg viewBox="0 0 10 10" className="size-[10px]" fill="none" stroke="currentColor">
          <circle cx="5" cy="5" r="2.900" strokeWidth="1.200" />
          <circle cx="5" cy="5" r="4.200" strokeWidth="1.300" strokeDasharray="1.400 1.900" />
        </svg>
      </DrawCell>
      <DrawCell>
        <svg viewBox="0 0 10 10" className="size-[10px]" fill="none" stroke="currentColor">
          <circle cx="4" cy="4.5" r="2.8" strokeDasharray="2 1" />
          <path d="M0 1.5 2 0M6 0l2 1.500M7.500 5.500v4M5.500 7.500h4" />
        </svg>
      </DrawCell>
      <DrawCell className="w-[22px]">
        <svg viewBox="0 0 10 10" className="size-[10px]">
          <rect width="8" height="8" rx="1" fill="currentColor" />
          <path d="M9.5 3v6.5H3" fill="none" stroke="currentColor" strokeDasharray="1.5 1" />
        </svg>
        <Caret />
      </DrawCell>
      <DrawCell className="w-5">
        <svg viewBox="0 0 10 10" className="size-[9px]" fill="none" stroke="currentColor">
          <path d="M.5 7V.5H6M2.5 2.5h6v7h-6Z" />
        </svg>
        <Caret />
      </DrawCell>
      <DrawCell>
        <svg viewBox="0 0 8 10" className="h-[10px] w-2">
          <path d="M1 4.5h6a.8.8 0 0 1 .8.8v3.9a.8.8 0 0 1-.8.8H1a.8.8 0 0 1-.8-.8V5.3A.8.8 0 0 1 1 4.5Z" fill="currentColor" />
          <path d="M2 5V2.8a2 2 0 0 1 4 0V5" fill="none" stroke="currentColor" />
          <path d="M4 6.5v1.8" stroke="#1e222d" />
        </svg>
      </DrawCell>
      <DrawCell>
        <svg viewBox="0 0 10 8" className="h-[7px] w-[9px]">
          <path d="M0 4c2.5-4.5 7.5-4.5 10 0-2.5 4.5-7.5 4.5-10 0Z" fill="currentColor" />
          <circle cx="5" cy="4" r="1.8" fill="currentColor" stroke="#1e222d" />
        </svg>
      </DrawCell>
      <DrawCell>
        <svg viewBox="0 0 8 10" className="h-[10px] w-2" fill="currentColor">
          <path d="M.5 2.5h7V9a1 1 0 0 1-1 1h-5a1 1 0 0 1-1-1ZM0 .8h2.5L3 0h2l.5.8H8v1H0Z" />
        </svg>
      </DrawCell>
    </div>
  );
}

const ranges: [string, string][] = [
  ["1D", "w-4"],
  ["5D", "w-[16.5px]"],
  ["1M", "w-[17px]"],
  ["3M", "w-[17px]"],
  ["6M", "w-[17px]"],
  ["YTD", "w-[20.5px]"],
  ["1Y", "w-[15.5px]"],
  ["5Y", "w-4"],
  ["All", "w-[17.5px]"],
];

function RangeBar() {
  return (
    <div className="relative mt-px flex h-5 items-center bg-[#131722] pt-px pl-[9px] text-[7.2px] text-[#7d818b]">
      {ranges.map(([label, width]) => (
        <span key={label} className={width}>{label}</span>
      ))}
      <span className="ml-px border-l border-[#2a2e39] pl-2 text-[7.4px] leading-3">Go to...</span>
      <span className="ml-auto text-[7.4px]">03:19:17 (UTC)</span>
      <span className="ml-[8px] border-l border-[#2a2e39] pl-[9px] leading-3">%</span>
      <span className="ml-2">log</span>
      <span className="mr-[6px] ml-2 text-[#2f70d6]">auto</span>
      <DrawingToolbar />
    </div>
  );
}

function PanelTabs() {
  return (
    <div className="mt-[3px] flex h-5 bg-[#131722] text-[7.2px] text-[#7d818b]">
      <Cell className="w-[73px] gap-[3px] pl-[6px]">
        Stock Screener
        <ChevronDown className="size-[7px]" strokeWidth={2.2} />
      </Cell>
      <Cell className="w-[53px]">Text Notes</Cell>
      <Cell className="w-[55px]">Pine Editor</Cell>
      <Cell className="w-[69px]">Strategy Tester</Cell>
      <Cell className="w-[63px]">Trading Panel</Cell>
      <div className="ml-auto flex items-center gap-[14px] pr-[7px]">
        <ChevronUp className="size-3" strokeWidth={1.8} />
        <svg viewBox="0 0 11 9" className="h-[9px] w-[11px]" fill="none" stroke="currentColor">
          <path d="M.5.5h10v8H.5ZM.5 2.200h10" />
        </svg>
      </div>
    </div>
  );
}

function TaskSlot({ className = "w-[33.6px]", children }: { className?: string; children: ReactNode }) {
  return <div className={`flex h-full shrink-0 items-center justify-center ${className}`}>{children}</div>;
}

function Taskbar() {
  return (
    <div className="flex h-[27px] items-center bg-[#1f1f1f] text-white">
      <div className="flex h-full w-[33px] items-center justify-center bg-[#171717]">
        <svg viewBox="0 0 12 12" className="size-[12px]" fill="#fff">
          <path d="M0 1.700 5.300 1v4.700H0ZM6 .9 12 0v5.700H6ZM0 6.300h5.300V11L0 10.300ZM6 6.300h6V12l-6-.9Z" />
        </svg>
      </div>
      <div className="flex h-full w-[232px] items-center bg-[#f1f1f1] text-[#3b3b3b]">
        <Search className="ml-[8px] size-[11px] -scale-x-100" strokeWidth={2.2} />
        <span className="ml-[7px] text-[10px] tracking-[-0.2px]">Type here to search</span>
      </div>
      <div className="ml-1 h-[17px] w-[3px] border-x border-[#3e3e3e]" />
      <TaskSlot className="ml-[10px] w-7 border-b border-[#76b9ed]">
        <svg viewBox="0 0 17 14" className="h-[14px] w-[17px]">
          <path d="M0 5 8.500 0 17 5v9H0Z" fill="#fff" />
          <path d="M1.500 5.500h14L9 9.500 8 7.500Z" fill="#1f1f1f" />
        </svg>
      </TaskSlot>
      <TaskSlot className="ml-[3px] w-[33px]">
        <span className="flex size-[15px] items-center justify-center border border-[#e8952b] bg-[#2f1b05] text-[8px] font-bold text-[#f79a2c]">Ai</span>
      </TaskSlot>
      <TaskSlot>
        <span className="flex size-4 items-center justify-center bg-black">
          <svg viewBox="0 0 11 7" className="h-[7px] w-[11px]">
            <path d="M0 0h11v7H0Z" fill="#fff" />
            <path d="M1.300 1.200H3L4.500 3.500 3 5.800H1.300ZM9.700 1.200H8L6.500 3.500 8 5.800h1.700ZM4.300 0h2.400L5.500 1.500ZM4.300 7h2.400L5.500 5.500Z" fill="#000" />
          </svg>
        </span>
      </TaskSlot>
      <TaskSlot className="w-[34px]">
        <span className="flex size-[15px] items-center justify-center bg-[#f5f6f7] text-[8.5px] font-semibold text-[#2f9bc9]">Lc</span>
      </TaskSlot>
      <TaskSlot className="w-[34px]">
        <svg viewBox="0 0 15 15" className="size-[15px]">
          <path d="M0 0h15v15H0Z" fill="#f2f2f2" />
          <path d="M2 12.500C5 11 8 6 7.300 2.500 6.300 1 6 5 8.500 8s5 3 4.500 1.700C12 8 4.500 9.500 2.500 12" fill="none" stroke="#e23b35" strokeWidth="1.100" />
        </svg>
      </TaskSlot>
      <TaskSlot>
        <svg viewBox="0 0 16 16" className="size-4">
          <path d="M4 1 15 0v8L5 10Z" fill="#2a55c8" />
          <path d="M0 4 12 2l1 7-11 2Z" fill="#e6edf6" />
          <path d="m1.200 5 9.800-1.500.8 4.600L3 9.600Z" fill="#2e63dc" />
          <ellipse cx="9" cy="13" rx="5" ry="2.300" fill="#cfd3d8" />
          <path d="M6 10h4v3H6Z" fill="#9fa8b3" />
        </svg>
      </TaskSlot>
      <TaskSlot className="ml-px w-[33px] border-b border-[#76b9ed] bg-[#4a4a4a]">
        <Brave className="h-4 w-[14px]" />
      </TaskSlot>
      <div className="ml-auto flex h-full items-center">
        <span className="flex h-[14px] w-[33px] items-center justify-center border border-white bg-[#17984a] text-[9px]">100%</span>
        <i className="h-[5px] w-[2px] bg-white" />
        <Plug className="ml-[3px] size-[9px] fill-white" strokeWidth={2.5} />
        <ChevronUp className="ml-[6px] size-[10px]" strokeWidth={2} />
        <svg viewBox="0 0 11 8" className="ml-[6px] h-2 w-[11px]" fill="#fff">
          <path d="M3 2h7v1.500h1V6h-1v1.500H3ZM0 0h1v1h1V0h1v2.500L2 4v3H1V4L0 2.500Z" />
        </svg>
        <Volume2 className="ml-[5px] size-[11px]" strokeWidth={1.6} />
        <span className="ml-[7px] w-[17px] text-[7.8px] tracking-[-0.1px]">ENG</span>
        <div className="ml-[6px] w-[38px] text-center text-[7.8px] leading-[12px] tracking-[-0.1px] whitespace-nowrap">
          <div>10:19 AM</div>
          <div>4/12/2020</div>
        </div>
        <div className="relative ml-[13px] flex h-full w-[28px] items-center">
          <svg viewBox="0 0 12 11" className="mb-1 h-[11px] w-3">
            <path d="M0 0h11v8H5L2.500 10.500V8H0Z" fill="#fff" />
            <path d="M2 2.500h7M2 5h7" stroke="#1f1f1f" strokeWidth=".8" />
          </svg>
          <span className="absolute top-[13px] left-[4px] flex h-[11px] w-[13px] items-center justify-center rounded-full bg-[#4d4d4d] text-[7.5px] font-bold">20</span>
        </div>
      </div>
    </div>
  );
}

export default function App() {
  return (
    <div className="h-[487px] w-[866px] overflow-hidden bg-[#2a2e39] font-['Noto_Sans',sans-serif]">
      <TabStrip />
      <AddressBar />
      <Bookmarks />
      <div className="flex h-[394px] pt-px">
        <LeftBar />
        <div className="ml-[2px] w-[808px]">
          <Header />
          <div className="relative h-[328px] bg-white">
            <Chart />
            <Legend />
            <div className="absolute top-4 right-[39px] flex gap-[3px] text-[#50535e]">
              <span className="flex size-[11px] items-center justify-center rounded-[2px] border border-[#dfe1e6] bg-white">
                <ArrowDown className="size-[7px]" strokeWidth={3} />
              </span>
              <span className="flex size-[11px] items-center justify-center rounded-[2px] border border-[#dfe1e6] bg-white">
                <Maximize className="size-[7px]" strokeWidth={3} />
              </span>
            </div>
            <div className="absolute top-[280px] left-[5px] flex h-[11px] items-center text-[6.8px] leading-none tracking-[-0.08px] text-[#555963]">
              <span className="flex size-[11px] items-center justify-center rounded-[2px] border border-[#dfe1e6] bg-white">
                <ChevronDown className="size-[7px]" strokeWidth={3} />
              </span>
              <span className="ml-[4px] bg-white/50">Stoch RSI 3 3 14 14 close</span>
              <span className="ml-[5px] bg-white/50 font-medium text-[#2f8cf0]">30.67</span>
              <span className="ml-[3px] bg-white/50 font-medium text-[#f57a28]">28.15</span>
            </div>
          </div>
          <RangeBar />
          <PanelTabs />
        </div>
        <div className="w-[3px]" />
        <RightBar />
      </div>
      <Taskbar />
    </div>
  );
}
